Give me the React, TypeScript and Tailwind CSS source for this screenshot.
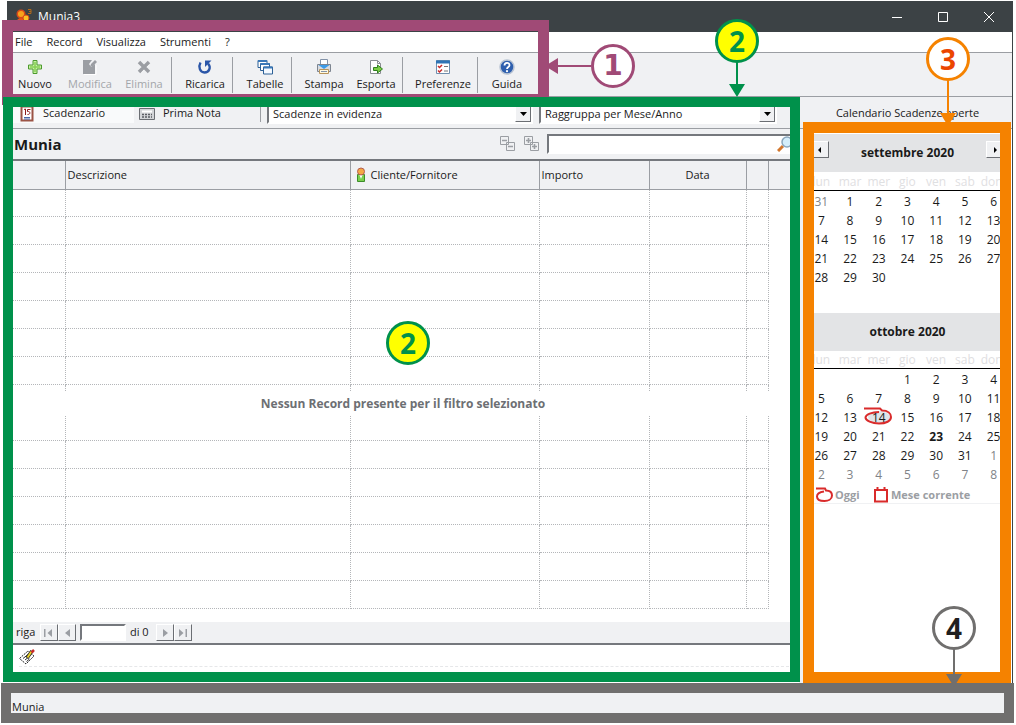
import { ReactNode } from "react";
import clsx from "clsx";

type Day = { label: string; tone?: "muted" | "bold" | "today" };

const menu = ["File", "Record", "Visualizza", "Strumenti", "?"];
const weekdays = ["lun", "mar", "mer", "gio", "ven", "sab", "dom"];

const range = (from: number, to: number, tone?: Day["tone"]): Day[] =>
  Array.from({ length: to - from + 1 }, (_, i) => ({
    label: String(from + i),
    tone,
  }));

const blank = (count: number): Day[] =>
  Array.from({ length: count }, () => ({ label: "" }));

const september: Day[] = [
  { label: "31", tone: "muted" },
  ...range(1, 30),
  ...blank(4),
];

const october: Day[] = [
  ...blank(3),
  ...range(1, 13),
  { label: "14", tone: "today" },
  ...range(15, 22),
  { label: "23", tone: "bold" },
  ...range(24, 31),
  ...range(1, 8, "muted"),
];

function chunk<T>(arr: T[], size: number): T[][] {
  const out: T[][] = [];
  for (let i = 0; i < arr.length; i += size) out.push(arr.slice(i, i + size));
  return out;
}

function Icon({ children }: { children: ReactNode }) {
  return (
    <svg viewBox="0 0 16 16" className="h-4 w-4 shrink-0" aria-hidden="true">
      {children}
    </svg>
  );
}

const AppIcon = () => (
  <Icon>
    <path d="M0 16c0-5 2-7 5-7s6 2 6 7z" fill="#e8541c" />
    <circle cx="5" cy="5" r="3.800" fill="#f6a21c" stroke="#d9481a" strokeWidth="1.500" />
    <path d="M5 16c0-3 2-5 5-5s6 2 6 5z" fill="#f6a21c" stroke="#b93815" />
    <circle cx="10" cy="9" r="3" fill="#fbbf24" stroke="#d9481a" />
    <path d="M12 .500h3v4h-3M13 2.500h2" fill="none" stroke="#b4691a" />
  </Icon>
);

const PlusIcon = () => (
  <Icon>
    <path
      d="M6 1.500h4V6h4.500v4H10v4.500H6V10H1.500V6H6z"
      fill="#c9f0a4"
      stroke="#4b9a2c"
    />
    <path d="M8 3v10M3 8h10" stroke="#86cf55" strokeWidth="1.500" />
  </Icon>
);

const EditIcon = () => (
  <Icon>
    <path d="M1 1h9l-3 4 2 3 4-3v10H1z" fill="#9b9ea3" />
    <path d="M8 8l1-3 4-4 2 2-4 4z" fill="#9b9ea3" />
    <path d="M2 15.500h12V6" fill="none" stroke="#fff" />
  </Icon>
);

const DeleteIcon = () => (
  <Icon>
    <path d="M4.500 4.500l8 8m0-8l-8 8" stroke="#fff" strokeWidth="3.500" />
    <path d="M3 3l10 10M13 3L3 13" stroke="#9b9ea3" strokeWidth="3.500" />
  </Icon>
);

const ReloadIcon = () => (
  <Icon>
    <path
      d="M3.500 3.500C1 8 3 13.500 7.500 13.500s7-5 3.500-9"
      fill="none"
      stroke="#2b56a8"
      strokeWidth="2.400"
    />
    <path d="M8 1.500h6.500L8 8z" fill="#2b56a8" />
  </Icon>
);

const TablesIcon = () => (
  <Icon>
    <path d="M1 1.500h9v7H1z" fill="#fff" stroke="#2d6096" />
    <path d="M1 2h9" stroke="#3b78b8" strokeWidth="2" />
    <path d="M3.500 4.500h9v7h-9z" fill="#fff" stroke="#2d6096" />
    <path d="M3.500 5h9" stroke="#3b78b8" strokeWidth="2" />
    <path d="M6.500 8h9v7h-9z" fill="#f4f9ff" stroke="#2d6096" />
    <path d="M6.500 8.500h9" stroke="#3b78b8" strokeWidth="2" />
  </Icon>
);

const PrintIcon = () => (
  <Icon>
    <path d="M4.500.500h7V6h-7z" fill="#fff" stroke="#8292a8" />
    <path d="M1.500 5.500h13v7h-13z" fill="#d8dbe0" stroke="#7d8590" />
    <path d="M2.500 6l5.500 4 5.500-4z" fill="#3b9be8" />
    <path d="M3.500 10.500h9v4h-9z" fill="#fff8e0" stroke="#b8945a" />
    <path d="M5 12.500h6" stroke="#8292a8" />
  </Icon>
);

const ExportIcon = () => (
  <Icon>
    <path d="M2.500 1.500h7l3 3v10h-10z" fill="#fff" stroke="#8a8d92" />
    <path d="M9.500 1.500v3h3" fill="none" stroke="#8a8d92" />
    <path
      d="M5.500 8.500h4V6l5 4-5 4v-2.500h-4z"
      fill="#7ccf45"
      stroke="#317e20"
    />
  </Icon>
);

const PreferencesIcon = () => (
  <Icon>
    <path d="M1.500 1.500h13v13h-13z" fill="#fff" stroke="#6f8fae" />
    <path d="M1 3h14" stroke="#2f74b5" strokeWidth="3" />
    <path
      d="M3 7l1.500 1.500L7 6M3 11.500L4.500 13 7 10.500"
      fill="none"
      stroke="#c92a2a"
      strokeWidth="1.500"
    />
    <path d="M9 7.500h4M9 12h4" stroke="#777" />
  </Icon>
);

const HelpIcon = () => (
  <Icon>
    <circle cx="8" cy="8" r="7" fill="#2e5fae" stroke="#b9c4d3" strokeWidth="1.500" />
    <path
      d="M5.500 6.500C5.500 3 10.500 3 10.500 6.200 10.500 8 8 8 8 10"
      fill="none"
      stroke="#fff"
      strokeWidth="1.800"
    />
    <circle cx="8" cy="12.200" r="1.100" fill="#fff" />
  </Icon>
);

const AgendaIcon = () => (
  <Icon>
    <path d="M2.500.500h11v14h-11z" fill="#fff" stroke="#9b5446" strokeWidth="2" />
    <path
      d="M5 3.500L6.500 3v6M11.500 3.500h-3v2c3-.500 3.500 3 0 3"
      fill="none"
      stroke="#8f1d1d"
    />
    <path d="M5 11.500h6M5 13h6" stroke="#4a69a8" />
  </Icon>
);

const LedgerIcon = () => (
  <Icon>
    <path d="M.500 2.500h15v11H.500z" fill="#d3d5d8" stroke="#6b6e73" />
    <path d="M3 5.500h10" stroke="#fff" strokeWidth="2" />
    <path
      d="M3 8.500h2m1 0h2m1 0h2m1 0h1M3 11h2m1 0h2m1 0h2m1 0h1"
      stroke="#5b5e63"
      strokeWidth="1.500"
    />
  </Icon>
);

const CollapseIcon = ({ plus = false }: { plus?: boolean }) => (
  <Icon>
    <path d="M.500.500h8v8h-8zM6.500 6.500h8v8h-8z" fill="#f0f1f3" stroke="#9b9ea3" />
    <path
      d={plus ? "M2 4.500h5M4.500 2v5M8 10.500h5M10.500 8v5" : "M2 4.500h5M8 10.500h5"}
      stroke="#9b9ea3"
      strokeWidth="1.600"
    />
  </Icon>
);

const PersonIcon = () => (
  <Icon>
    <path d="M4.500 7.500h7v7h-7z" fill="#7bd04e" stroke="#3d8c2a" />
    <path d="M6.500 8l1.500 4 1.500-4z" fill="#fff" />
    <circle cx="8" cy="4.500" r="3.500" fill="#f4a843" stroke="#b45b50" />
  </Icon>
);

const SearchIcon = () => (
  <Icon>
    <path d="M1 15l5-5" stroke="#d2772d" strokeWidth="3" />
    <circle cx="10" cy="6" r="5" fill="#d3eefb" stroke="#8aa7bd" strokeWidth="1.500" />
  </Icon>
);

const NoteIcon = () => (
  <Icon>
    <path d="M.500 9.500L9 2l6 5-8 8z" fill="#fff" stroke="#222" strokeDasharray="2 1" />
    <path d="M4 9.500l5-4M6 11l5-4M7.500 12.500l3-2.500" stroke="#333" />
    <path d="M8 9l5-7" stroke="#222" strokeWidth="3.500" />
    <path d="M8.500 8.500l4-6" stroke="#e9d22a" strokeWidth="2" />
    <path d="M12.500 3.500L15 1" stroke="#c92a2a" strokeWidth="2.500" />
  </Icon>
);

function ToolButton({
  icon,
  label,
  disabled = false,
  className = "w-[54px]",
}: {
  icon: ReactNode;
  label: string;
  disabled?: boolean;
  className?: string;
}) {
  return (
    <button
      type="button"
      disabled={disabled}
      className={clsx(
        "flex shrink-0 flex-col items-center gap-px whitespace-nowrap",
        disabled ? "text-[#a3a6aa]" : "text-[#1a1a1a]",
        className,
      )}
    >
      {icon}
      <span className="leading-4">{label}</span>
    </button>
  );
}

const Divider = ({ className = "h-9" }: { className?: string }) => (
  <span className={clsx("mr-1.5 w-px shrink-0 bg-[#9b9ea3]", className)} />
);

function Combo({
  label,
  value,
  className,
}: {
  label: string;
  value: string;
  className: string;
}) {
  return (
    <div
      className={clsx(
        "relative h-5 border-2 border-[#75787d] border-r-white border-b-white bg-white",
        className,
      )}
    >
      <select
        aria-label={label}
        className="h-4 w-full appearance-none bg-white pl-1 leading-4 outline-none"
      >
        <option>{value}</option>
      </select>
      <span className="pointer-events-none absolute inset-y-0 right-0 flex w-4 items-center justify-center border border-white border-r-[#6b6e73] border-b-[#6b6e73] bg-[#f0f1f3]">
        <svg viewBox="0 0 7 4" className="h-1 w-[7px]">
          <path d="M0 0h7L3.500 4z" fill="#000" />
        </svg>
      </span>
    </div>
  );
}

function NavButton({
  label,
  d,
  active = false,
}: {
  label: string;
  d: string;
  active?: boolean;
}) {
  return (
    <button
      type="button"
      aria-label={label}
      className="flex h-[17px] w-[18px] items-center justify-center border border-white border-r-[#6b6e73] border-b-[#6b6e73] bg-[#f0f1f3]"
    >
      <svg viewBox="0 0 12 10" className="h-2.5 w-3">
        <path d={d} fill={active ? "#000" : "#9b9ea3"} />
      </svg>
    </button>
  );
}

function Callout({ n, className }: { n: string; className: string }) {
  return (
    <div
      className={clsx(
        "flex h-11 w-11 items-center justify-center rounded-full border-[3px] text-[28px] leading-none font-bold",
        className,
      )}
    >
      {n}
    </div>
  );
}

function DownArrow({ className, length }: { className: string; length: number }) {
  return (
    <svg
      width="16"
      height={length}
      viewBox={`0 0 16 ${length}`}
      className={className}
      aria-hidden="true"
    >
      <path
        d={`M7 0h2v${length - 13}h7L8 ${length}L0 ${length - 13}h7z`}
        fill="currentColor"
      />
    </svg>
  );
}

function Month({
  title,
  days,
  nav = false,
}: {
  title: string;
  days: Day[];
  nav?: boolean;
}) {
  return (
    <section>
      <header className="relative flex h-[38px] items-center justify-center bg-[#e3e4e6] text-[12px] font-bold">
        {title}
        {nav && (
          <div className="absolute inset-x-1 top-[7px] flex justify-between">
            <NavButton label="Mese precedente" d="M7 2v6L4 5z" active />
            <NavButton label="Mese successivo" d="M5 2v6l3-3z" active />
          </div>
        )}
      </header>
      <table className="w-full table-fixed text-center text-[12px]">
        <thead>
          <tr className="h-[18px] border-b border-black text-[#dfe0e2]">
            {weekdays.map((day) => (
              <th key={day} className="p-0 pt-0.5 leading-[14px] font-normal">
                {day}
              </th>
            ))}
          </tr>
        </thead>
        <tbody>
          {chunk(days, 7).map((week, i) => (
            <tr key={i} className="h-[19px]">
              {week.map((day, j) => (
                <td
                  key={j}
                  className={clsx(
                    "relative p-0 pt-0.5 leading-[17px]",
                    day.tone === "muted" && "text-[#808387]",
                    day.tone === "bold" && "font-bold",
                  )}
                >
                  {day.tone === "today" && (
                    <svg
                      viewBox="0 0 28 18"
                      className="absolute inset-0 h-[18px] w-7"
                      aria-hidden="true"
                    >
                      <ellipse cx="15" cy="10" rx="11" ry="6" fill="#dfe3e8" />
                      <path
                        d="M0 1.500h16l2 2c6 0 9 3 9 6.500 0 4-5 6.500-12 6.500S1.500 13.500 1.500 10.500 8 5 15 5"
                        fill="none"
                        stroke="#d92b2b"
                        strokeWidth="2"
                      />
                    </svg>
                  )}
                  <span className="relative">{day.label}</span>
                </td>
              ))}
            </tr>
          ))}
        </tbody>
      </table>
    </section>
  );
}

export default function App() {
  return (
    <div className="relative flex min-h-screen flex-col overflow-hidden bg-white pt-px pb-0.5 font-['Open_Sans',sans-serif] text-[11px] text-[#1a1a1a]">
      <div className="mr-[3px] ml-[7px] flex flex-1 flex-col border-r border-[#3c4245] bg-[#f0f1f3]">
        <div className="flex h-[31px] items-center bg-[#3c4245] pl-[9px] text-white">
          <AppIcon />
          <span className="ml-1.5 text-[12px]">Munia3</span>
          <div className="ml-auto flex gap-[30px] pr-[15px]">
            {[
              ["Riduci", "M3 8.500h10"],
              ["Ingrandisci", "M3.500 3.500h9v9h-9z"],
              ["Chiudi", "M3 3l10 10M13 3L3 13"],
            ].map(([label, d]) => (
              <button key={label} type="button" aria-label={label}>
                <Icon>
                  <path d={d} fill="none" stroke="#fff" />
                </Icon>
              </button>
            ))}
          </div>
        </div>

        <div className="relative">
          <nav className="flex h-[21px] items-center gap-3.5 border-b border-[#9b9ea3] bg-white pl-2">
            {menu.map((item) => (
              <button key={item} type="button">
                {item}
              </button>
            ))}
          </nav>
          <div className="flex h-11 items-center border-b border-[#9b9ea3] pt-px">
            <ToolButton icon={<PlusIcon />} label="Nuovo" className="w-14" />
            <ToolButton icon={<EditIcon />} label="Modifica" disabled />
            <ToolButton icon={<DeleteIcon />} label="Elimina" disabled />
            <Divider />
            <ToolButton icon={<ReloadIcon />} label="Ricarica" />
            <Divider />
            <ToolButton icon={<TablesIcon />} label="Tabelle" className="w-[52px]" />
            <Divider />
            <ToolButton icon={<PrintIcon />} label="Stampa" className="w-[52px]" />
            <ToolButton icon={<ExportIcon />} label="Esporta" className="w-[52px]" />
            <Divider />
            <ToolButton icon={<PreferencesIcon />} label="Preferenze" className="w-[68px]" />
            <Divider />
            <ToolButton icon={<HelpIcon />} label="Guida" className="w-[46px]" />
          </div>
          <div className="pointer-events-none absolute -top-3 -bottom-2 -left-[5px] w-[547px] border-[11px] border-[#a04a76]" />
          <div className="absolute top-3 left-[538px] flex items-center text-[#a04a76]">
            <svg viewBox="0 0 46 16" className="h-4 w-[46px]" aria-hidden="true">
              <path d="M0 8L13 0v7h33v2H13v7z" fill="currentColor" />
            </svg>
            <Callout
              n="1"
              className="border-[#a04a76] bg-white font-['DejaVu_Sans',sans-serif]"
            />
          </div>
        </div>

        <div className="flex flex-1">
          <main className="relative flex min-w-0 flex-1 flex-col">
            <div className="flex h-8 items-center border-b border-[#9b9ea3] pt-0.5">
              <button
                type="button"
                className="flex h-[19px] w-[127px] shrink-0 items-center gap-2 bg-[#f9fafb] pl-3"
              >
                <AgendaIcon />
                Scadenzario
              </button>
              <button
                type="button"
                className="flex h-[19px] w-[126px] shrink-0 items-center gap-2 pl-[5px]"
              >
                <LedgerIcon />
                Prima Nota
              </button>
              <Divider className="h-4" />
              <Combo
                label="Filtro scadenze"
                value="Scadenze in evidenza"
                className="w-[266px]"
              />
              <Combo
                label="Raggruppamento"
                value="Raggruppa per Mese/Anno"
                className="ml-1.5 w-[238px]"
              />
            </div>

            <div className="mr-1 flex h-8 items-center border-b-2 border-[#75787d] pl-[7px]">
              <h1 className="text-[15px] font-bold">Munia</h1>
              <div className="ml-auto flex gap-2 pr-[7px]">
                <button type="button" aria-label="Comprimi">
                  <CollapseIcon />
                </button>
                <button type="button" aria-label="Espandi">
                  <CollapseIcon plus />
                </button>
              </div>
              <div className="flex h-5 w-[252px] items-center border-2 border-[#75787d] border-r-white border-b-white bg-white">
                <input
                  type="search"
                  aria-label="Cerca"
                  className="min-w-0 flex-1 px-1 outline-none"
                />
                <span className="mr-1">
                  <SearchIcon />
                </span>
              </div>
            </div>

            <div className="relative mr-1 flex-1 overflow-hidden bg-white">
              <table className="w-full table-fixed border-collapse text-left">
                <thead>
                  <tr className="h-7 border-b border-[#9b9ea3] bg-[#f0f1f3]">
                    <th className="w-[58px] border-r border-[#9b9ea3]" />
                    <th className="border-r border-[#9b9ea3] px-0.5 font-normal">
                      Descrizione
                    </th>
                    <th className="w-[189px] border-r border-[#9b9ea3] px-0.5 font-normal">
                      <span className="flex items-center gap-0.5">
                        <PersonIcon />
                        Cliente/Fornitore
                      </span>
                    </th>
                    <th className="w-[110px] border-r border-[#9b9ea3] px-0.5 font-normal">
                      Importo
                    </th>
                    <th className="w-[97px] border-r border-[#9b9ea3] text-center font-normal">
                      Data
                    </th>
                    <th className="w-[22px] border-r border-[#9b9ea3]" />
                    <th className="w-[31px]" />
                  </tr>
                </thead>
                <tbody>
                  {Array.from({ length: 15 }).map((_, row) => (
                    <tr key={row} className={row === 0 ? "h-[27px]" : "h-7"}>
                      {Array.from({ length: 6 }).map((_, col) => (
                        <td
                          key={col}
                          className="border-r border-b border-dotted border-[#b4b6b9]"
                        />
                      ))}
                      <td />
                    </tr>
                  ))}
                </tbody>
              </table>
              <p className="absolute inset-x-0 top-[231px] bg-white text-center text-[12px] leading-6 font-bold text-[#6d6f73]">
                Nessun Record presente per il filtro selezionato
              </p>
              <Callout
                n="2"
                className="absolute top-40 left-[379px] border-[#00914b] bg-[#ffff00] text-[#00914b]"
              />
            </div>

            <div className="mr-1 flex h-[23px] items-start border-b-2 border-[#75787d] pt-0.5 pl-[9px]">
              <span className="w-6 leading-4">riga</span>
              <NavButton label="Primo" d="M1 1h1.500v8H1zM9 1v8L4.500 5z" />
              <NavButton label="Precedente" d="M9 1v8L4 5z" />
              <input
                aria-label="Riga"
                className="ml-1 h-[17px] w-[46px] border-2 border-[#75787d] border-r-white border-b-white bg-white outline-none"
              />
              <span className="w-[30px] pl-1 leading-4">di 0</span>
              <NavButton label="Successivo" d="M4 1v8l5-4z" />
              <NavButton label="Ultimo" d="M2 1v8l4.500-4zM8.500 1H10v8H8.500z" />
            </div>
            <div className="mr-1 h-[38px] bg-white pl-3">
              <div className="h-[22px] border-b border-dashed border-[#e6e7e9] pt-1">
                <NoteIcon />
              </div>
            </div>
            <div className="pointer-events-none absolute top-0 right-[3px] bottom-px -left-1 border-10 border-[#00914b]" />
          </main>

          <aside className="relative flex w-[209px] shrink-0 flex-col">
            <h2 className="flex h-8 items-center justify-center border-b border-[#9b9ea3] pt-0.5">
              Calendario Scadenze aperte
            </h2>
            <div className="flex flex-1 flex-col bg-white px-1 pt-[5px]">
              <Month title="settembre 2020" days={september} nav />
              <div className="mt-[27px]">
                <Month title="ottobre 2020" days={october} />
              </div>
              <div className="flex h-[21px] items-center border-b border-[#f0f1f3] pt-1 pl-2 font-bold text-[#9b9ea3]">
                <svg viewBox="0 0 18 16" className="h-4 w-[18px]" aria-hidden="true">
                  <path
                    d="M1 1.500h9l1 2c4 0 6 2 6 5 0 4-4 5.500-7.500 5.500C4 14 2 12 2 9.500S5 5 9 4.500"
                    fill="none"
                    stroke="#d92b2b"
                    strokeWidth="2"
                  />
                </svg>
                <span className="ml-0.5 w-[38px]">Oggi</span>
                <svg viewBox="0 0 16 16" className="h-4 w-4" aria-hidden="true">
                  <path
                    d="M2 3h12v11.500H2zM4.500 3V0M11.500 3V0"
                    fill="none"
                    stroke="#d92b2b"
                    strokeWidth="2"
                  />
                </svg>
                <span className="ml-0.5">Mese corrente</span>
              </div>
            </div>
            <div className="pointer-events-none absolute top-[25px] right-px bottom-0 left-0 border-11 border-[#f58200]" />
          </aside>
        </div>
      </div>

      <footer className="mr-0.5 ml-px h-10 border-10 border-[#706f6e] bg-[#f0f1f3] pl-px leading-5">
        <span className="block pt-1">Munia</span>
      </footer>

      <div className="pointer-events-none absolute top-[19px] right-[257px] flex flex-col items-center text-[#00914b]">
        <Callout n="2" className="border-[#00914b] bg-[#ffff00]" />
        <DownArrow length={35} className="-mt-px" />
      </div>
      <div className="pointer-events-none absolute top-[37px] right-[46px] flex flex-col items-center text-[#f58200]">
        <Callout n="3" className="border-[#f58200] bg-white text-[#eb4600]" />
        <DownArrow length={46} className="-mt-px" />
      </div>
      <div className="pointer-events-none absolute right-10 bottom-[38px] flex flex-col items-center text-[#706f6e]">
        <Callout n="4" className="border-[#706f6e] bg-white text-[#1f1f1f]" />
        <DownArrow length={38} className="-mt-px" />
      </div>
    </div>
  );
}
